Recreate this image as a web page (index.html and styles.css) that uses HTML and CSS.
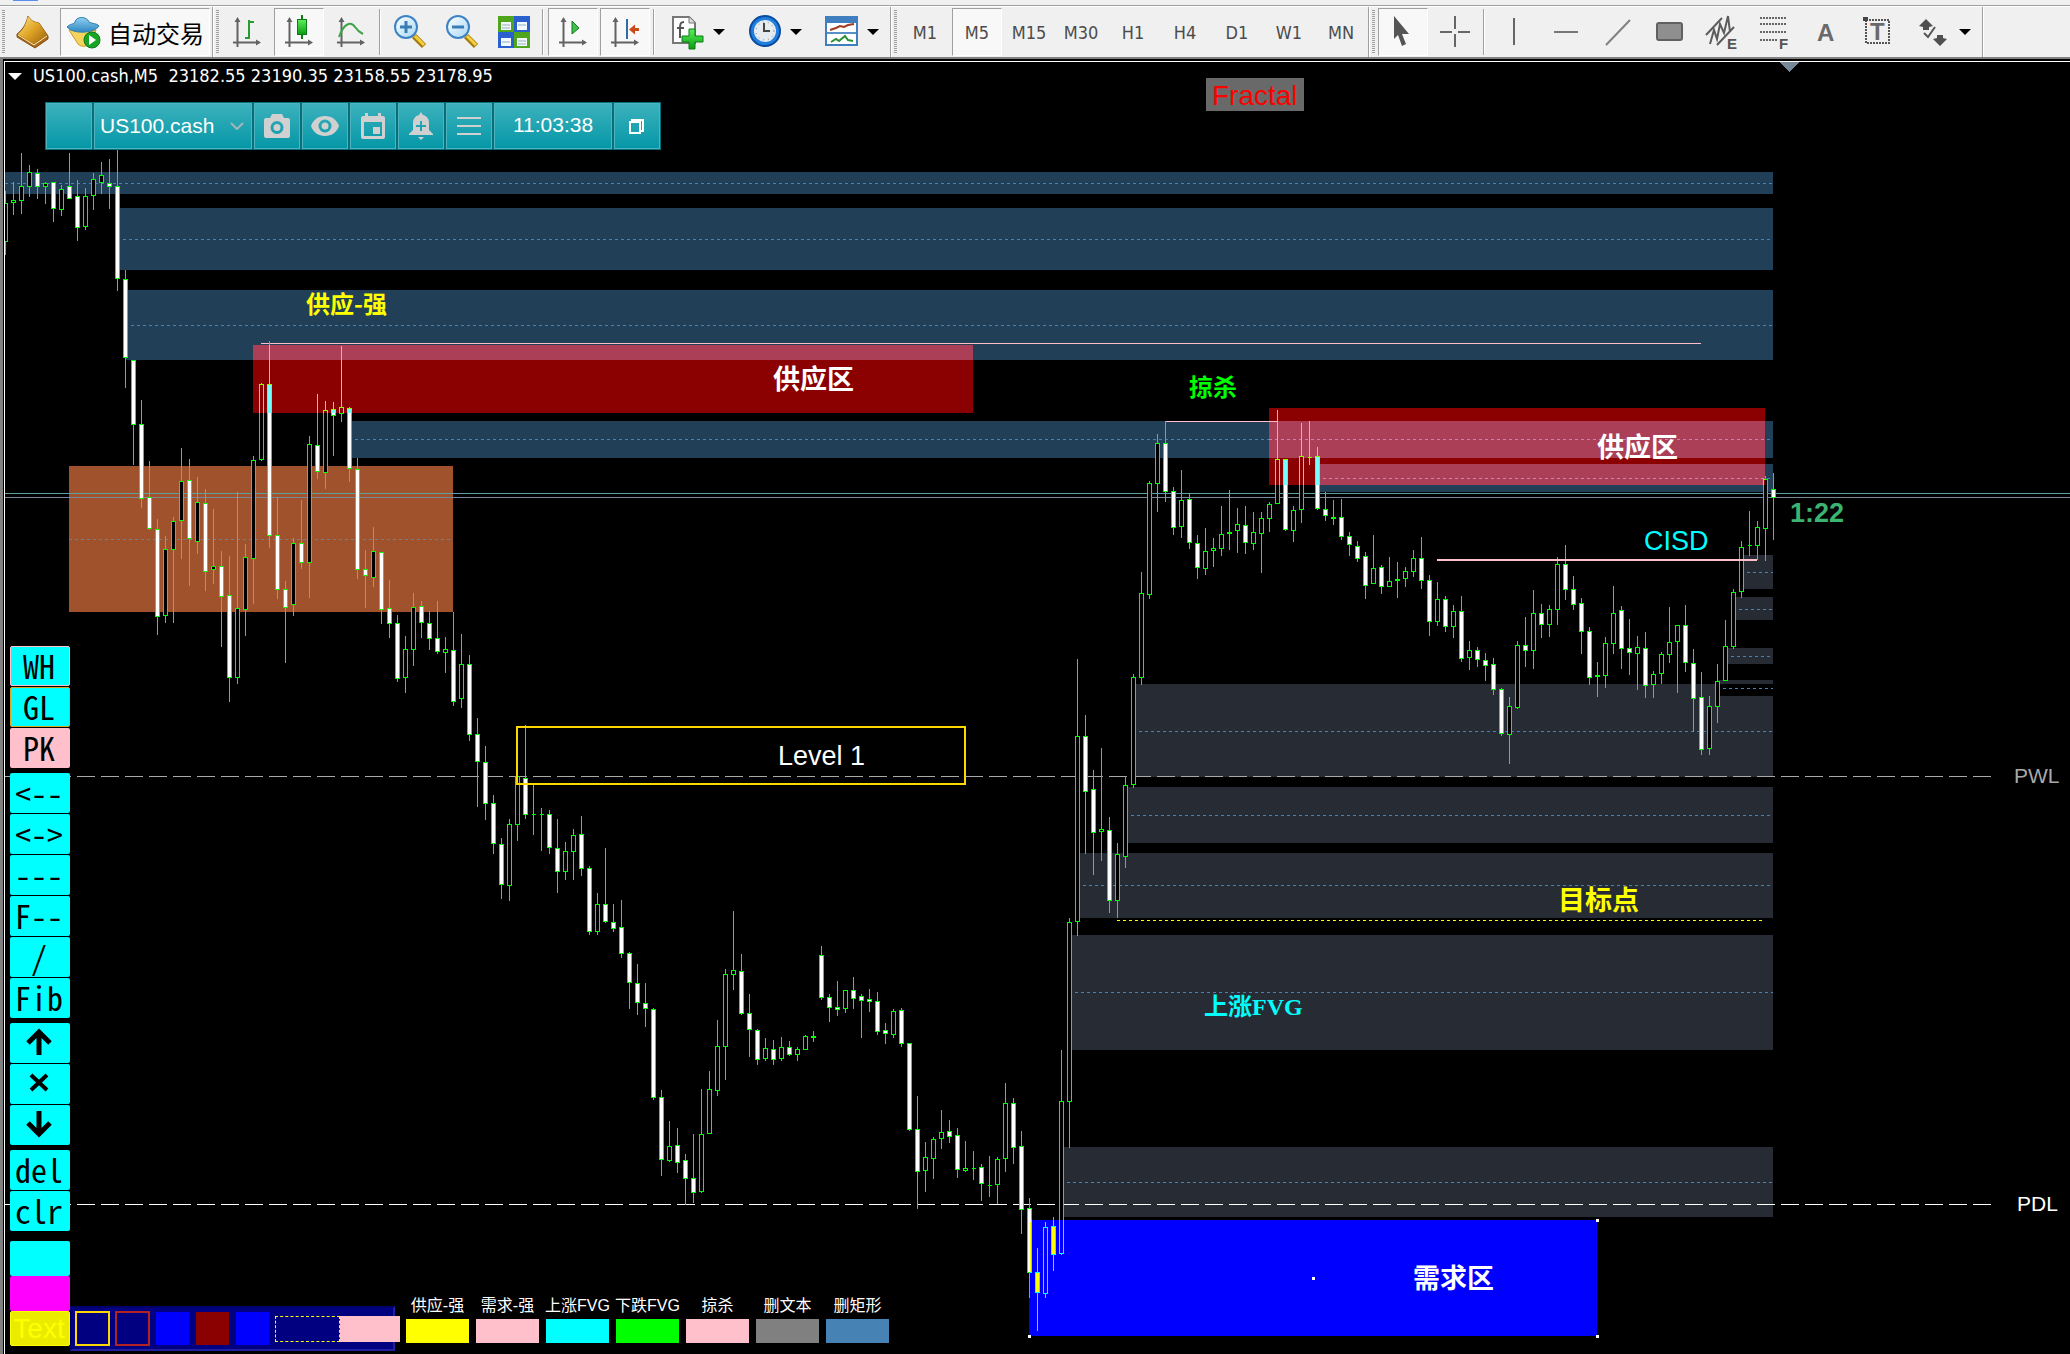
FILE: index.html
```html
<!DOCTYPE html>
<html lang="zh-CN">
<head>
<meta charset="utf-8">
<title>US100.cash,M5</title>
<link rel="stylesheet" href="styles.css">
</head>
<body>
<svg class="defs" aria-hidden="true">
  <defs>
    <linearGradient id="gold" x1="0" y1="0" x2="1" y2="1"><stop offset="0" stop-color="#ffe58a"/><stop offset=".5" stop-color="#e0a526"/><stop offset="1" stop-color="#9a5f10"/></linearGradient>
    <linearGradient id="green" x1="0" y1="0" x2="0" y2="1"><stop offset="0" stop-color="#5cf05c"/><stop offset="1" stop-color="#0a9c10"/></linearGradient>
    <linearGradient id="sky" x1="0" y1="0" x2="0" y2="1"><stop offset="0" stop-color="#8fd0f2"/><stop offset="1" stop-color="#2f86bf"/></linearGradient>
    <linearGradient id="lens" x1="0" y1="0" x2="1" y2="1"><stop offset="0" stop-color="#ffffff"/><stop offset="1" stop-color="#a6d8f5"/></linearGradient>
    <symbol id="axes" viewBox="0 0 34 34"><path d="M7.500 6v26M3 27.500h26" fill="none" stroke="#636363" stroke-width="2"/><path d="M7.500 2l-3 5h6zM31 27.500l-5-3v6z" fill="#636363"/></symbol>
  </defs>
</svg>
<div class="strip"><span class="strip-mark"></span></div>
<header class="toolbar">
  <div class="group">
    <span class="grip"></span>
    <button class="tool" aria-label="新订单"><svg viewBox="0 0 34 34"><path d="M12 1c3 5 6 6 11 7l9 13v3L19 33 1 22v-3c5-4 9-9 11-18z" fill="#a5661a" stroke="#8a5510"/><path d="M12 1c3 5 6 6 11 7l8 12-13 9L2 19c5-4 8-9 10-18z" fill="url(#gold)"/><path d="M2 20l16 10 13-9" fill="none" stroke="#fff0b0"/></svg></button>
    <button class="tool auto on"><svg viewBox="0 0 34 34"><path d="M3 15h27l-6 14c-4 3-9 3-12 0z" fill="#f5d35c" stroke="#c59a2a"/><path d="M1 12c4-4 6-2 8-5 1-6 12-6 14 0 3 2 8 1 10 4-4 7-25 9-32 1z" fill="url(#sky)" stroke="#2e7faf"/><circle cx="26" cy="25" r="8" fill="#18a425" stroke="#0c7a16"/><path d="M23 20v10l7-5z" fill="#fff"/></svg><span>自动交易</span></button>
  </div>
  <div class="group">
    <span class="grip"></span>
    <button class="tool" aria-label="柱状图"><svg viewBox="0 0 34 34"><use href="#axes"/><path d="M19 5v19M15 23h4M19 7h5" fill="none" stroke="#2b9a33" stroke-width="2"/></svg></button>
    <button class="tool on" aria-label="蜡烛图"><svg viewBox="0 0 34 34"><use href="#axes"/><path d="M20 0v24" stroke="#0c7a16" stroke-width="2"/><rect x="15.500" y="4.500" width="9" height="15" fill="url(#green)" stroke="#0c7a16"/></svg></button>
    <button class="tool" aria-label="折线图"><svg viewBox="0 0 34 34"><use href="#axes"/><path d="M5 22C10 8 17 6 21 12c2 3 4 5 8 7" fill="none" stroke="#3fa348" stroke-width="2"/></svg></button>
    <span class="sep"></span>
    <button class="tool" aria-label="放大"><svg viewBox="0 0 34 34"><path d="M21 21l10 10" stroke="#a57a10" stroke-width="6"/><path d="M22 21l9 9" stroke="#f4d03c" stroke-width="3"/><circle cx="13" cy="12" r="11" fill="url(#lens)" stroke="#3c82c4" stroke-width="2"/><path d="M13 6v12M7 12h12" stroke="#3a7db5" stroke-width="3"/></svg></button>
    <button class="tool" aria-label="缩小"><svg viewBox="0 0 34 34"><path d="M21 21l10 10" stroke="#a57a10" stroke-width="6"/><path d="M22 21l9 9" stroke="#f4d03c" stroke-width="3"/><circle cx="13" cy="12" r="11" fill="url(#lens)" stroke="#3c82c4" stroke-width="2"/><path d="M7 12h12" stroke="#3a7db5" stroke-width="3"/></svg></button>
    <button class="tool" aria-label="平铺窗口"><svg viewBox="0 0 34 34"><rect x="1" y="1" width="16" height="16" fill="#4fa51c"/><rect x="17" y="1" width="16" height="16" fill="#2a5fd0"/><rect x="1" y="17" width="16" height="16" fill="#2a5fd0"/><rect x="17" y="17" width="16" height="16" fill="#4fa51c"/><path d="M4 7h10v8H4zM20 7h10v8H20zM4 23h10v8H4zM20 23h10v8H20z" fill="#f4f8ff"/><path d="M5 10h8M5 13h8M21 10h8M5 27h8M21 26h8M21 29h8" stroke="#8fb0c0"/></svg></button>
    <span class="sep"></span>
    <button class="tool on" aria-label="自动滚动"><svg viewBox="0 0 34 34"><use href="#axes"/><path d="M16 6v13l7-6z" fill="#3fc04a" stroke="#157a1e"/></svg></button>
    <button class="tool on" aria-label="图表平移"><svg viewBox="0 0 34 34"><use href="#axes"/><path d="M19 4v20" stroke="#2d6da3" stroke-width="2"/><path d="M21 14.500l6-5v3.500h4v3h-4v3.500z" fill="#cc4a18"/></svg></button>
    <span class="sep"></span>
    <button class="tool drop" aria-label="指标列表"><svg viewBox="0 0 34 34"><path d="M2 2h16l6 6v20H2z" fill="#fff" stroke="#777" stroke-width="2"/><path d="M18 2v6h6" fill="#ddd" stroke="#777"/><path d="M13 7c-4 0-4 3-4 7v9M6 13h7" fill="none" stroke="#555" stroke-width="2"/><path d="M18 14h6v7h8v6h-8v7h-6v-7h-7v-6h7z" fill="url(#green)" stroke="#0b7d12"/></svg><i></i></button>
    <button class="tool drop" aria-label="时间周期"><svg viewBox="0 0 34 34"><circle cx="17" cy="16" r="15" fill="#1f7fe0" stroke="#0b4a9c" stroke-width="2"/><circle cx="17" cy="16" r="11" fill="#e6ebf0"/><path d="M16 8v8h6" fill="none" stroke="#444" stroke-width="2"/><circle cx="17" cy="16" r="9" fill="none" stroke="#888" stroke-dasharray="1 4"/></svg><i></i></button>
    <button class="tool drop" aria-label="模板"><svg viewBox="0 0 34 34"><rect x="1" y="2" width="31" height="28" fill="#fff" stroke="#3f7fc0" stroke-width="2"/><path d="M1 2h31v6H1z" fill="#3f7fc0"/><path d="M2 18h29" stroke="#5a90c8" stroke-width="2"/><path d="M5 15l6-2 4-2 4 1 4-2 6-1" fill="none" stroke="#a33a22" stroke-width="2"/><path d="M6 27l5-3 3 2 6-5 3 4 5 1" fill="none" stroke="#2c9136" stroke-width="2"/></svg><i></i></button>
  </div>
  <div class="group">
    <span class="grip"></span>
    <button class="tool">M1</button><button class="tool on">M5</button><button class="tool">M15</button><button class="tool">M30</button><button class="tool">H1</button><button class="tool">H4</button><button class="tool">D1</button><button class="tool">W1</button><button class="tool">MN</button>
  </div>
  <div class="group">
    <span class="grip"></span>
    <button class="tool on" aria-label="光标"><svg viewBox="0 0 34 34"><path d="M8 1v23l4-4 4 11 4-2-4-10h7z" fill="#555"/></svg></button>
    <button class="tool" aria-label="十字准线"><svg viewBox="0 0 34 34"><path d="M17 1v13M17 19v13M2 17h12M20 17h12" stroke="#666" stroke-width="2"/></svg></button>
    <span class="sep"></span>
    <button class="tool" aria-label="垂直线"><svg viewBox="0 0 34 34"><path d="M17 3v27" stroke="#666" stroke-width="2"/></svg></button>
    <button class="tool" aria-label="水平线"><svg viewBox="0 0 34 34"><path d="M5 17h24" stroke="#777" stroke-width="2"/></svg></button>
    <button class="tool" aria-label="趋势线"><svg viewBox="0 0 34 34"><path d="M5 30L29 5" stroke="#808080" stroke-width="2"/></svg></button>
    <button class="tool" aria-label="矩形"><svg viewBox="0 0 34 34"><rect x="4" y="8" width="25" height="17" rx="2" fill="#8f8f8f" stroke="#606060" stroke-width="2"/></svg></button>
    <button class="tool" aria-label="等距通道"><svg viewBox="0 0 34 34"><path d="M1 20L17 3M12 30L29 12M5 29l4-14 3 9 3-15 4 9 4-17 2 16" fill="none" stroke="#5c5c5c" stroke-width="2"/><text class="glyph" x="22" y="34">E</text></svg></button>
    <button class="tool" aria-label="斐波那契回调线"><svg viewBox="0 0 34 34"><path d="M3 3h27M3 9h27M3 17h27M3 25h18" stroke="#666" stroke-width="2" stroke-dasharray="2 1"/><text class="glyph" x="22" y="34">F</text></svg></button>
    <button class="tool" aria-label="文字"><svg viewBox="0 0 34 34"><text class="glyph big" x="8" y="26">A</text></svg></button>
    <button class="tool" aria-label="文字标签"><svg viewBox="0 0 34 34"><path d="M5 5h23v23H5z" fill="none" stroke="#555" stroke-width="2" stroke-dasharray="2 1"/><path d="M2 2h5v4H2z" fill="#444"/><text class="glyph big" x="9" y="25">T</text></svg></button>
    <button class="tool drop" aria-label="箭头"><svg viewBox="0 0 34 34"><path d="M9 4l7 7-4 1v3H6v-3l-4-1zM23 31l-7-7 4-1v-3h6v3l4 1z" fill="#505050"/><path d="M7 18l4 4 7-10" fill="none" stroke="#555" stroke-width="2"/></svg><i></i></button>
  </div>
</header>

<main class="frame">
  <section class="chart">
    <svg class="plot" role="img" aria-label="US100.cash M5">
      <defs>
        <clipPath id="supply-clip"><path d="M253 345h720v68H253zM1269 408h496v77h-496z"/></clipPath>
        <clipPath id="demand-clip"><path d="M1030 1220h567v116h-567z"/></clipPath>
      </defs>
      <g transform="translate(-5 -62)">
        <g id="zones"></g>
        <path class="void" d="M1720 684h53v12h-53z"/>
        <path class="base" d="M69 466h384v146H69z"/>
        <path class="base-mid" d="M69 539.500h384"/>
        <path class="supply" d="M253 345h720v68H253zM1269 408h496v77h-496z"/>
        <path class="supply-mix" d="M253 345h720v15H253zM1269 421h496v37h-496zM1320 464h445v21h-445z"/>
        <path class="supply-mid" d="M1269 439.500h496M1323 478.500h442"/>
        <g id="mids"></g>
        <path class="demand" d="M1029 1220h568v116h-568z"/>
        <line class="ask" x1="5" y1="493.500" x2="120%" y2="493.500"/>
        <line class="bid" x1="5" y1="497.500" x2="120%" y2="497.500"/>
        <path class="pwl" d="M5 776.500h1986"/>
        <path class="pdl" d="M5 1204.500h1986"/>
        <path class="pink" d="M261 343h1440v1H261zM1165 421h112v1h-112z"/>
        <path class="target" d="M1117 920.500h646"/>
        <g id="bars">
          <path id="wicks" class="wick"/>
          <path id="up" class="up"/>
          <path id="down" class="down"/>
        </g>
        <g clip-path="url(#supply-clip)"><use href="#bars" class="in-supply"/></g>
        <g clip-path="url(#demand-clip)"><use href="#bars" class="in-demand"/></g>
        <path class="pink" d="M1437 559h320v2h-320z"/>
        <rect class="level" x="517" y="727" width="448" height="57"/>
        <path class="handle" d="M1028 1219h3v3h-3zM1028 1335h3v3h-3zM1596 1219h3v3h-3zM1596 1335h3v3h-3zM1312 1277h3v3h-3z"/>
        <path class="shift" d="M1780 62h19l-9.500 10z"/>
        <path class="badge" d="M1206 78h98v33h-98z"/>
        <g class="note">
          <text x="1212" y="105" class="t28 red">Fractal</text>
          <text x="306" y="313" class="cjk t24 yellow">供应-强</text>
          <text x="773" y="389" class="cjk t27 white">供应区</text>
          <text x="1189" y="396" class="cjk t24 lime">掠杀</text>
          <text x="1597" y="457" class="cjk t27 white">供应区</text>
          <text x="1644" y="550" class="t27 cyan">CISD</text>
          <text x="1790" y="522" class="t27 bold sea">1:22</text>
          <text x="778" y="765" class="t27 white">Level 1</text>
          <text x="2014" y="783" class="t21 gray">PWL</text>
          <text x="2017" y="1211" class="t21 white">PDL</text>
          <text x="1558" y="910" class="cjk t27 yellow">目标点</text>
          <text x="1204" y="1015" class="serif t24 cyan">上涨FVG</text>
          <text x="1413" y="1288" class="cjk t27 white">需求区</text>
        </g>
      </g>
    </svg>

    <h1 class="title"><i class="caret"></i><span>US100.cash,M5&nbsp; 23182.55 23190.35 23158.55 23178.95</span></h1>

    <div class="panel">
      <span class="cell"></span>
      <label class="cell symbol"><select aria-label="交易品种"><option>US100.cash</option></select><svg class="chev" viewBox="0 0 14 8"><path d="M1 1l6 6 6-6" fill="none" stroke="#a5b5b8" stroke-width="2"/></svg></label>
      <button class="cell" aria-label="截图"><svg viewBox="0 0 28 28"><path fill-rule="evenodd" d="M9 2h10l2 4h4a2 2 0 0 1 2 2v16a2 2 0 0 1-2 2H3a2 2 0 0 1-2-2V8a2 2 0 0 1 2-2h4zM14 9a6.500 6.500 0 1 0 0 13 6.500 6.500 0 0 0 0-13zm0 3a3.500 3.500 0 1 1 0 7 3.500 3.500 0 0 1 0-7z"/></svg></button>
      <button class="cell" aria-label="显示"><svg viewBox="0 0 28 28"><path fill-rule="evenodd" d="M14 4c7 0 12 4 14 10-2 6-7 10-14 10S2 20 0 14C2 8 7 4 14 4zm0 3.500a6.500 6.500 0 1 0 0 13 6.500 6.500 0 0 0 0-13zm0 3a3.500 3.500 0 1 1 0 7 3.500 3.500 0 0 1 0-7z"/></svg></button>
      <button class="cell" aria-label="日历"><svg viewBox="0 0 28 28"><path fill-rule="evenodd" d="M6 1h3v3h10V1h3v3h2a2 2 0 0 1 2 2v19a2 2 0 0 1-2 2H4a2 2 0 0 1-2-2V6a2 2 0 0 1 2-2h2zM5 10v14h18V10zm9 5h7v7h-7z"/></svg></button>
      <button class="cell" aria-label="添加警报"><svg viewBox="0 0 28 28"><path fill-rule="evenodd" d="M14 0l2 3c4 1 6 4 6 8v7l4 4v1H2v-1l4-4v-7c0-4 2-7 6-8zM13 9v4H9v2h4v4h2v-4h4v-2h-4V9zM11 25h6l-3 3z"/></svg></button>
      <button class="cell" aria-label="菜单"><svg viewBox="0 0 28 28"><path d="M2 5h24v2H2zM2 13h24v2H2zM2 21h24v2H2z"/></svg></button>
      <span class="cell clock">11:03:38</span>
      <button class="cell" aria-label="还原"><svg viewBox="0 0 28 28"><path d="M7 10h10v11H7zM8 8h12v11h-2" fill="none" stroke="#fff" stroke-width="2"/></svg></button>
    </div>

    <div class="dock">
      <div class="keys">
        <div class="stack">
          <button class="key edge-pink">WH</button><button class="key edge-gold">GL</button><button class="key pinkkey">PK</button>
        </div>
        <div class="stack">
          <button class="key">&lt;--</button><button class="key">&lt;-&gt;</button><button class="key">---</button><button class="key">F--</button><button class="key">/</button><button class="key">Fib</button>
        </div>
        <div class="stack">
          <button class="key" aria-label="向上箭头"><svg viewBox="0 0 26 28"><path d="M13 27V4M2 15L13 4l11 11" fill="none" stroke="#000" stroke-width="5"/></svg></button>
          <button class="key" aria-label="叉号"><svg viewBox="0 0 26 28"><path d="M5 6l16 15M21 6L5 21" fill="none" stroke="#000" stroke-width="4"/></svg></button>
          <button class="key" aria-label="向下箭头"><svg viewBox="0 0 26 28"><path d="M13 1v23M2 13l11 11 11-11" fill="none" stroke="#000" stroke-width="5"/></svg></button>
        </div>
        <div class="stack">
          <button class="key">del</button><button class="key">clr</button>
        </div>
        <div class="stack colors">
          <button class="key" aria-label="青色"></button><button class="key magenta" aria-label="洋红"></button><button class="key text">Text</button>
        </div>
      </div>
      <div class="boxes">
        <button class="box line-gold" aria-label="金色边框"></button>
        <button class="box line-brown" aria-label="棕色边框"></button>
        <button class="box blue" aria-label="蓝色矩形"></button>
        <button class="box maroon" aria-label="深红矩形"></button>
        <button class="box blue" aria-label="蓝色矩形"></button>
        <button class="dash" aria-label="虚线"></button><button class="plain" aria-label="粉色"></button>
      </div>
      <div class="legend">
        <button>供应-强<i class="bg-yellow"></i></button>
        <button>需求-强<i class="bg-pink"></i></button>
        <button>上涨FVG<i class="bg-cyan"></i></button>
        <button>下跌FVG<i class="bg-lime"></i></button>
        <button>掠杀<i class="bg-pink"></i></button>
        <button>删文本<i class="bg-gray"></i></button>
        <button>删矩形<i class="bg-steel"></i></button>
      </div>
    </div>
  </section>
</main>
<script src="chart.js"></script>
</body>
</html>
```
FILE: styles.css
```css
* { box-sizing: border-box; }

body {
  margin: 0;
  min-height: 100vh;
  display: flex;
  flex-direction: column;
  background: #000;
  font-family: "Liberation Sans", "Noto Sans CJK SC", sans-serif;
  overflow-x: hidden;
}

button, select {
  font: inherit;
  color: inherit;
  margin: 0;
  padding: 0;
  border: 0;
  background: none;
}

.defs { position: absolute; width: 0; height: 0; }

/* ---- toolbar ---- */
.strip {
  height: 6px;
  padding-left: 13px;
  background: #f0f0f0;
  border-bottom: 1px solid #a0a0a0;
}
.strip-mark { display: block; width: 25px; height: 1px; background: #5b8def; }

.toolbar {
  display: flex;
  height: 51px;
  background: #f0f0f0;
  border-top: 1px solid #fff;
}
.group {
  display: flex;
  align-items: center;
  gap: 2px;
  padding: 0 2px;
  border-right: 1px solid #a0a0a0;
  box-shadow: 1px 0 #fff;
  margin-right: 1px;
}
.grip {
  width: 3px;
  height: 44px;
  margin-right: 1px;
  background: repeating-linear-gradient(#a0a0a0 0 1px, #f0f0f0 1px 2px);
}
.sep {
  width: 2px;
  height: 46px;
  margin: 0 2px 0 1px;
  border-left: 1px solid #a0a0a0;
  background: #fff;
}
.tool {
  display: flex;
  align-items: center;
  justify-content: center;
  width: 50px;
  height: 48px;
  border: 1px solid transparent;
  font-family: "DejaVu Sans Condensed", "DejaVu Sans", sans-serif;
  font-size: 18px;
  color: #4c4c4c;
}
.tool svg { width: 34px; height: 34px; flex: none; overflow: visible; }
.tool.on {
  background: #f8f8f8;
  border-color: #a0a0a0 #fff #fff #a0a0a0;
}
.tool.auto {
  width: 150px;
  gap: 8px;
  font-family: "Noto Sans CJK SC", sans-serif;
  font-size: 24px;
  color: #000;
}
.tool.drop {
  width: 75px;
  justify-content: flex-start;
  padding-left: 11px;
  gap: 8px;
}
.tool.drop i {
  border: 6px solid transparent;
  border-top-color: #000;
  border-bottom: 0;
}
.glyph { font: bold 15px "Liberation Sans", sans-serif; fill: #555; }
.glyph.big { font-size: 24px; fill: #6a6a6a; }

/* ---- chart frame ---- */
.frame {
  flex: 1;
  display: flex;
  border: solid #808080;
  border-width: 2px 0 0 3px;
  padding: 2px 0 0 1px;
}
.chart {
  position: relative;
  flex: 1;
  display: flex;
  flex-direction: column;
  border: solid #fff;
  border-width: 1px 0 0 1px;
}
.plot {
  position: absolute;
  inset: 0;
  width: 100%;
  height: 100%;
  shape-rendering: crispEdges;
}
.title, .panel, .dock { position: relative; }

.title {
  display: flex;
  align-items: center;
  gap: 11px;
  margin: 0 0 12px 3px;
  font: 18px/28px "DejaVu Sans Condensed", "DejaVu Sans", sans-serif;
  color: #fff;
}
.caret {
  border: 7px solid transparent;
  border-top-color: #fff;
  border-bottom: 0;
}

/* ---- plot parts ---- */
.z-bear { fill: #213f57; }
.z-bull { fill: #272b33; }
.mid { stroke: #4682b4; stroke-dasharray: 3 3; }
.void { fill: #000; }
.base { fill: #a0522d; }
.base-mid { stroke: #708090; stroke-dasharray: 3 3; }
.supply { fill: #8b0000; }
.supply-mix { fill: #aa3f57; }
.supply-mid { stroke: #cd82b4; stroke-dasharray: 3 3; }
.demand { fill: #0000ff; }
.ask { stroke: #5f9ea0; }
.bid { stroke: #778899; }
.pwl { stroke: #a9a9a9; stroke-dasharray: 18 6; }
.pdl { stroke: #fff; stroke-dasharray: 18 6; }
.pink { fill: #ffc0cb; }
.target { stroke: #ffff00; stroke-dasharray: 3 3; }
.level { fill: none; stroke: #ffd700; stroke-width: 2; }
.handle { fill: #fff; }
.shift { fill: #778899; }
.badge { fill: #696969; }

.plot { --line: #00ff00; --rise: #000; --fall: #fff; }
.in-supply { --line: #8bff00; --rise: #8b0000; --fall: #74ffff; }
.in-demand { --line: #00ffff; --rise: #0000ff; --fall: #ffff00; }
.wick { stroke: var(--line); }
.up { stroke: var(--line); fill: var(--rise); }
.down { stroke: var(--line); fill: var(--fall); }

.note { font-family: "Liberation Sans", sans-serif; }
.cjk { font-family: "Noto Sans CJK SC", sans-serif; font-weight: bold; }
.serif { font-family: "Liberation Serif", "Noto Sans CJK SC", serif; font-weight: bold; }
.bold { font-weight: bold; }
.t21 { font-size: 21px; }
.t24 { font-size: 24px; }
.t27 { font-size: 27px; }
.t28 { font-size: 28px; }
.red { fill: #ff0000; }
.yellow { fill: #ffff00; }
.white { fill: #fff; }
.lime { fill: #00ff00; }
.cyan { fill: #00ffff; }
.sea { fill: #3cb371; }
.gray { fill: #a9a9a9; }

/* ---- symbol panel ---- */
.panel {
  align-self: flex-start;
  display: flex;
  gap: 2px;
  height: 48px;
  margin-left: 40px;
  padding: 1px;
  background: #05707c;
}
.cell {
  display: flex;
  align-items: center;
  justify-content: center;
  width: 46px;
  border: 1px solid #4fb3bd;
  background: linear-gradient(#3cb1bd, #0597a7);
  font-size: 21px;
  color: #fff;
}
.cell svg { width: 28px; height: 28px; fill: #d0d0d0; }
.symbol { width: 158px; padding: 0 7px 0 5px; }
.symbol select { flex: 1; min-width: 0; padding-bottom: 2px; appearance: none; }
.symbol .chev { width: 14px; height: 8px; }
.clock { width: 118px; padding-bottom: 2px; }

/* ---- bottom dock ---- */
.dock {
  display: flex;
  align-items: flex-end;
  margin-top: auto;
  padding: 0 0 3px 5px;
}
.keys {
  display: flex;
  flex-direction: column;
  gap: 5px;
  width: 60px;
  margin-bottom: 5px;
}
.stack { display: flex; flex-direction: column; gap: 1px; }
.key {
  display: flex;
  align-items: center;
  justify-content: center;
  height: 40px;
  padding: 0 2px 3px 0;
  border-radius: 2px;
  background: #00ffff;
  color: #000;
  font: 32px/36px "Noto Sans CJK SC", monospace;
  font-feature-settings: "hwid";
}
.key svg { width: 26px; height: 28px; }
.edge-pink { border: 1px solid #ffc0cb; }
.edge-gold { border: 1px solid #daa520; }
.pinkkey { background: #ffc0cb; }
.colors { gap: 0; margin-top: 5px; }
.colors .key { height: 35px; }
.magenta { background: #ff00ff; }
.text {
  padding-bottom: 0;
  background: #ebeb00;
  border: 1px solid #ffff00;
  color: #ffff00;
  font: 28px/33px "Liberation Sans", sans-serif;
}

.boxes {
  display: flex;
  align-items: center;
  gap: 5px;
  width: 325px;
  height: 45px;
  padding-left: 3px;
  background: #000080;
  border: 2px solid #1f1f9f;
  border-top-color: #00006c;
  border-left-color: #00006c;
}
.box {
  flex: none;
  width: 35px;
  height: 35px;
  border: 1px solid transparent;
  background-clip: padding-box;
}
.line-gold { border: 2px solid #ffd700; }
.line-brown { border: 2px solid #b22222; }
.blue { background-color: #0000ff; }
.maroon { background-color: #8b0000; }
.dash { flex: none; width: 65px; height: 26px; border: 1px dashed #ffff00; }
.plain { flex: none; width: 60px; height: 26px; margin-left: -5px; background: #ffc0cb; }

.legend { display: flex; gap: 7px; margin: 0 0 8px 11px; }
.legend button {
  display: flex;
  flex-direction: column;
  align-items: center;
  gap: 3px;
  width: 63px;
  font: 16px/20px "Liberation Sans", "Noto Sans CJK SC", sans-serif;
  color: #fff;
  white-space: nowrap;
}
.legend i { width: 63px; height: 24px; }
.bg-yellow { background: #ffff00; }
.bg-pink { background: #ffc0cb; }
.bg-cyan { background: #00ffff; }
.bg-lime { background: #00ff00; }
.bg-gray { background: #808080; }
.bg-steel { background: #4682b4; }
```
FILE: chart.js
```js
// Bars are kept in runs. Each run has its own origin and resolution;
// a bar is [high, body top, body bottom, low, falling].
const FIRST_X = 5;
const PITCH = 8;
const ZONE_END = 1773;

const runs = [
  { origin: 140, unit: 2.8, bars: [
    [143,177,285,321,0],[118,168,176,210,0],[36,129,171,207,0],[70,90,132,160,0],[81,92,132,165,1],
    [118,120,132,179,0],[118,118,193,230,1],[125,137,196,213,0],[36,129,165,165,1],[112,157,246,283,1],
    [134,157,244,252,0],[92,109,157,196,0],[62,98,120,151,0],[53,120,132,193,1],[28,129,389,423,1],
    [364,389,610,694,1],[616,616,798,910,1],[728,795,1005,1030,1],[899,1000,1089,1092,1],[1061,1089,1336,1386,1],
    [1109,1145,1333,1352,0],[1056,1067,1148,1352,0],[862,955,1067,1173,0],[893,952,1117,1249,1],[944,1014,1126,1159,0],
    [977,1016,1210,1263,1],[1033,1193,1204,1243,0],[1151,1193,1280,1420,1],[1165,1274,1506,1574,1],[986,1310,1506,1523,0],
    [1131,1168,1316,1389,0],[885,896,1173,1299,0],[680,683,896,899,0],[563,683,1109,1142,1],[1000,1106,1260,1285,1],
    [1235,1257,1310,1464,1],[1114,1128,1302,1333,0],[1008,1128,1184,1201,1],[829,851,1184,1282,0],[711,854,930,949,1],
    [731,756,932,977,0],[734,753,773,885,1],[577,748,767,790,0],[748,750,921,958,1],[890,921,1204,1229,1],
    [1148,1201,1221,1310,1],[1084,1151,1226,1252,0],[1154,1154,1316,1355,1],[1232,1310,1355,1394,1],[1330,1352,1509,1518,1],
    [1389,1425,1506,1548,0],[1268,1308,1428,1473,0],[1291,1305,1352,1394,1],[1319,1352,1397,1428,1],[1291,1394,1434,1439,1],
    [1392,1425,1436,1492,0]
  ] },
  { origin: 600, unit: 2.08, bars: [
    [25,104,212,220,1],[71,133,206,225,0],[114,133,281,293,1],[245,279,337,430,1],[304,337,424,458,1],
    [406,422,507,528,1],[495,507,593,622,1],[455,466,595,626,0],[366,366,468,501,0],[260,370,447,455,1],
    [383,446,448,489,0],[433,446,448,522,0],[437,445,516,528,1],[455,516,566,609,1],[503,522,566,582,0],
    [476,489,524,582,0],[449,487,559,574,1],[553,557,690,697,1],[609,632,690,697,0],[516,632,670,672,1],
    [632,670,684,690,1],[624,680,736,744,1],[732,734,796,851,1],[757,796,838,863,1],[796,838,851,888,1],
    [848,851,1036,1040,1],[1019,1034,1165,1198,1],[1083,1136,1167,1169,0],[1098,1133,1171,1192,1],[1152,1165,1204,1258,1],
    [1110,1202,1233,1254,1],[1017,1110,1231,1233,0],[979,1017,1110,1110,0],[873,927,1021,1031,0],[767,778,930,998,0],
    [647,770,780,811,0],[736,772,861,863,1],[819,859,894,950,1],[892,894,957,967,1],[911,932,955,959,0],
    [915,934,957,967,1],[909,930,955,959,0],[917,930,946,948,1],[930,934,946,959,0],[905,907,936,936,0],
    [896,907,910,919,0],[720,738,828,832,1],[819,826,848,878,1],[792,846,853,865,1],[811,811,851,859,0],
    [784,811,830,851,1],[819,824,834,911,1],[809,830,836,857,1],[815,834,898,905,1],[880,894,903,923,1],
    [851,855,905,911,0],[848,853,923,930,1],[921,921,1102,1104,1],[1031,1100,1190,1266,1],[1127,1158,1187,1231,0],
    [1117,1121,1162,1204,0],[1061,1106,1121,1142,0],[1081,1104,1117,1129,1],[1098,1113,1185,1202,1],[1125,1181,1187,1190,0],
    [1146,1181,1183,1206,0],[1173,1179,1214,1250,1],[1156,1217,1219,1242,0],[1158,1162,1217,1256,0],[1004,1046,1162,1190,0],
    [1036,1046,1140,1173,1],[1104,1135,1269,1318,1],[1244,1264,1400,1452,1],[1348,1397,1441,1520,1],[1293,1304,1443,1452,0],
    [1283,1302,1362,1395,1],[936,1042,1360,1362,0],[661,670,1044,1140,0],[123,283,670,699,0],[239,283,399,528,1],
    [354,393,485,572,1],[308,476,482,543,0],[451,478,626,651,1],[505,528,626,661,0],[366,385,534,557,0],
    [154,160,385,391,0]
  ] },
  { origin: 380, unit: 2.8, bars: [
    [538,597,834,854,0],[283,288,602,613,0],[151,176,291,370,0],[115,176,314,342,1],[300,311,414,434,1],
    [252,336,412,442,0],[317,333,456,473,1],[434,456,526,557,1],[414,479,529,546,0],[442,470,479,524,0],
    [353,431,473,493,0],[308,426,431,476,0],[358,403,423,484,0],[353,406,456,487,1],[370,426,459,476,0],
    [370,386,431,540,0],[342,347,389,426,0],[84,221,347,347,0],[221,221,420,423,1],[353,364,423,454,0],
    [120,213,364,400,0],[115,216,218,238,0],[188,213,361,364,1],[314,361,381,395,1],[336,384,389,406,0],
    [333,384,440,448,1],[426,437,462,493,1],[451,465,501,510,1],[482,493,577,613,1],[434,526,571,571,0],
    [518,524,580,599,1],[496,563,580,580,0],[510,557,563,610,0],[524,535,557,580,0],[476,498,538,552,0],
    [440,498,563,585,1],[546,560,678,717,1],[566,613,678,689,0],[605,613,692,706,1],[630,647,692,722,0],
    [605,647,781,790,1],[731,756,778,812,0],[748,756,784,804,1],[764,784,801,843,1],[778,795,868,882,1],
    [862,865,991,997,1],[888,913,994,1075,0],[731,742,918,921,0],[664,742,759,804,1],[588,652,759,809,0],
    [627,652,686,722,1],[630,641,686,720,0],[496,515,644,686,0],[462,515,588,616,1],[549,585,630,644,1]
  ] },
  { origin: 380, unit: 3, bars: [
    [654,669,756,822,1],[741,753,894,915,1],[846,885,891,951,0],[771,789,888,924,0],[618,699,792,822,0],
    [678,690,807,867,1],[717,804,819,885,1],[768,801,822,930,0],[756,804,918,954,1],[873,882,915,954,0],
    [816,822,882,912,0],[681,786,825,849,0],[735,735,786,939,0],[675,735,849,876,1],[807,849,957,1056,1],
    [876,951,1110,1125,1],[948,978,1107,1125,0],[852,903,981,1029,0],[720,798,903,903,0],[627,636,801,807,0],
    [483,501,636,654,0],[393,495,498,528,0],[423,441,498,540,0],[288,297,447,543,0],[279,327,354,480,1]
  ] }
];

// [x, top, bottom, middle, class]
const zones = [
  [5, 172, 194, 183, "z-bear"],
  [117, 208, 270, 239, "z-bear"],
  [125, 290, 360, 325, "z-bear"],
  [349, 421, 458, 439, "z-bear"],
  [1317, 464, 492, 478, "z-bear"],
  [1133, 684, 777, 731, "z-bull"],
  [1125, 787, 843, 815, "z-bull"],
  [1077, 853, 918, 885, "z-bull"],
  [1069, 935, 1050, 992, "z-bull"],
  [1061, 1147, 1217, 1182, "z-bull"],
  [1741, 555, 589, 572, "z-bull"],
  [1733, 597, 620, 609, "z-bull"],
  [1725, 648, 664, 656, "z-bull"],
  [1717, 680, 684, 688, "z-bull"]
];

function add(parent, name, attrs) {
  const node = document.createElementNS("http://www.w3.org/2000/svg", name);
  for (const key in attrs) node.setAttribute(key, attrs[key]);
  parent.appendChild(node);
}

const zoneLayer = document.getElementById("zones");
const midLayer = document.getElementById("mids");
for (const [x, top, bottom, middle, kind] of zones) {
  add(zoneLayer, "rect", { class: kind, x, y: top, width: ZONE_END - x, height: bottom - top });
  const start = x === FIRST_X ? x : x + 6;
  // the middle line takes another colour where a supply box covers it
  const spans = middle === 439 ? [[start, 1269], [1767, ZONE_END]]
    : middle === 478 ? [[1767, ZONE_END]]
    : [[start, ZONE_END]];
  for (const [from, to] of spans) {
    add(midLayer, "path", { class: "mid", d: `M${from} ${middle + 0.5}H${to}` });
  }
}

let wicks = "";
let up = "";
let down = "";
let index = 0;
for (const { origin, unit, bars } of runs) {
  for (const [high, top, bottom, low, falling] of bars) {
    const x = FIRST_X + PITCH * index++;
    const y = (v) => origin + Math.round(v / unit);
    const height = Math.max(y(bottom) - y(top) - 1, 0);
    wicks += `M${x + 0.5} ${y(high)}V${y(low)}`;
    const body = `M${x - 1.5} ${y(top) + 0.5}h4v${height}h-4z`;
    if (falling) down += body; else up += body;
  }
}
document.getElementById("wicks").setAttribute("d", wicks);
document.getElementById("up").setAttribute("d", up);
document.getElementById("down").setAttribute("d", down);
```
